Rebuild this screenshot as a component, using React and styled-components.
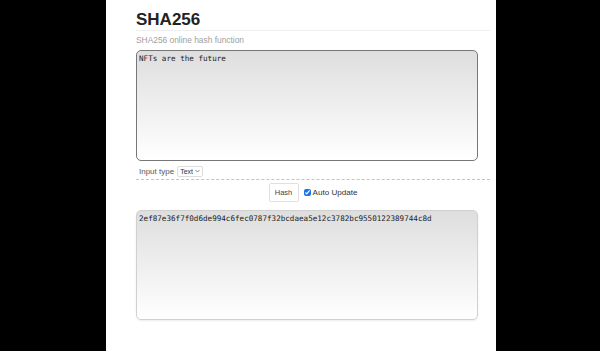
import React, { useEffect, useRef, useState } from "react";
import styled, { createGlobalStyle } from "styled-components";

const Global = createGlobalStyle`
  html, body { margin: 0; padding: 0; background: #000; }
  body { font-family: "Liberation Sans", Arial, sans-serif; }
`;

const Page = styled.div`
  width: 390px;
  min-height: 351px;
  margin-left: 106px;
  background: #fff;
  box-sizing: border-box;
  padding: 10px 6px 0 30px;
`;

const Title = styled.h1`
  margin: 0;
  font-size: 17px;
  line-height: 20px;
  font-weight: bold;
  color: #222;
  border-bottom: 1px solid #eee;
`;

const Subtitle = styled.p`
  margin: 3px 0 0;
  font-size: 8.4px;
  line-height: 12px;
  color: #a0a0a0;
`;

const Area = styled.textarea`
  display: block;
  box-sizing: border-box;
  width: 342px;
  height: ${(p) => p.$h}px;
  margin: ${(p) => p.$mt}px 0 0;
  padding: 3px 2px;
  font-family: "DejaVu Sans Mono", monospace;
  font-size: 7.6px;
  line-height: 10px;
  color: #222;
  border: 1px solid ${(p) => p.$border};
  border-radius: 5px;
  background: linear-gradient(#dedede, #ffffff);
  box-shadow: ${(p) => (p.$soft ? "0 1px 2px rgba(0,0,0,0.08)" : "none")};
  resize: none;
  outline: none;
  caret-color: #222;
`;

const TypeRow = styled.div`
  display: flex;
  align-items: center;
  gap: 3px;
  margin-top: 4px;
  padding-left: 3px;
  height: 12px;
  font-size: 8px;
  color: #555;
`;

const SelectBox = styled.label`
  display: flex;
  align-items: center;
  gap: 2px;
  height: 11px;
  padding: 0 2px 0 2px;
  border: 1px solid #ddd;
  border-radius: 2px;
  box-sizing: border-box;
`;

const Select = styled.select`
  appearance: none;
  border: none;
  background: transparent;
  padding: 0;
  margin: 0;
  font-family: "Liberation Sans", Arial, sans-serif;
  font-size: 7px;
  color: #333;
  outline: none;
`;

const Divider = styled.div`
  margin-top: 2px;
  border-bottom: 1px dashed #c4c4c4;
`;

const Controls = styled.div`
  display: flex;
  justify-content: center;
  align-items: center;
  gap: 5px;
  margin-top: 3px;
`;

const Button = styled.button`
  width: 30px;
  height: 19px;
  padding: 0;
  border: 1px solid #e0e0e0;
  border-radius: 2px;
  background: #fff;
  font-family: "Liberation Sans", Arial, sans-serif;
  font-size: 7.5px;
  color: #444;
`;

const Check = styled.label`
  display: flex;
  align-items: center;
  gap: 2px;
  font-size: 8.1px;
  color: #333;
`;

const Box = styled.input`
  width: 7px;
  height: 7px;
  margin: 0;
  accent-color: #1a73e8;
`;

export default function App() {
  const [text, setText] = useState("NFTs are the future ");
  const ref = useRef(null);
  useEffect(() => {
    const el = ref.current;
    if (el) {
      el.focus();
      el.setSelectionRange(el.value.length, el.value.length);
    }
  }, []);
  return (
    <>
      <Global />
      <Page>
        <Title>SHA256</Title>
        <Subtitle>SHA256 online hash function</Subtitle>
        <Area
          ref={ref}
          $h={111}
          $mt={4}
          $border="#777"
          value={text}
          onChange={(e) => setText(e.target.value)}
        />
        <TypeRow>
          <span>Input type</span>
          <SelectBox>
            <Select defaultValue="text">
              <option value="text">Text</option>
              <option value="hex">Hex</option>
            </Select>
            <svg width="5" height="4" viewBox="0 0 5 4">
              <path d="M0.5 1 L2.5 3 L4.5 1" fill="none" stroke="#555" strokeWidth="0.7" />
            </svg>
          </SelectBox>
        </TypeRow>
        <Divider />
        <Controls>
          <Button>Hash</Button>
          <Check>
            <Box type="checkbox" defaultChecked />
            Auto Update
          </Check>
        </Controls>
        <Area
          $h={110}
          $mt={8}
          $border="#d0d0d0"
          $soft
          readOnly
          value="2ef87e36f7f0d6de994c6fec0787f32bcdaea5e12c3782bc9550122389744c8d"
        />
      </Page>
    </>
  );
}
